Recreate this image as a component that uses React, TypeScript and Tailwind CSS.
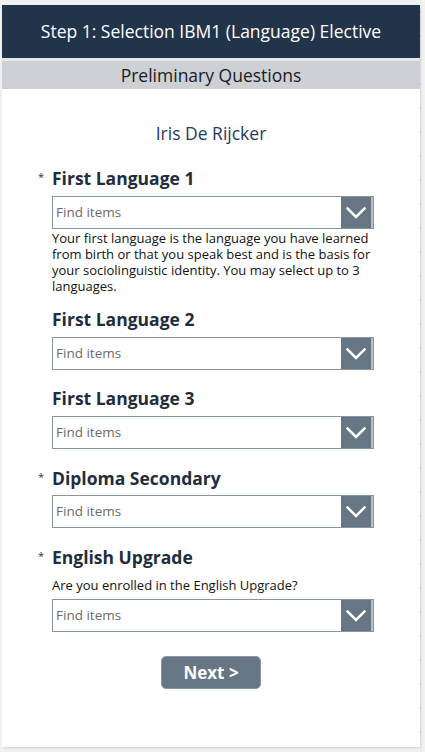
import React from 'react';

const Chevron = () => (
  <svg width="20" height="12" viewBox="0 0 20 12" fill="none">
    <path d="M1.5 1.5 L10 10 L18.5 1.5" stroke="white" strokeWidth="2.5" strokeLinecap="square" />
  </svg>
);

const Dropdown = () => (
  <div className="flex h-[33px] w-[322px] border border-[#8a949e] bg-white">
    <div className="flex flex-1 items-center pl-[3px] text-[13.5px] text-[#6b6b6b]">Find items</div>
    <div className="flex w-[32px] items-center justify-center bg-[#667684] border-r-2 border-[#b8bec4]">
      <Chevron />
    </div>
  </div>
);

const Label = ({ text, required }: { text: string; required?: boolean }) => (
  <div className="relative flex h-[24px] items-center">
    {required && <span className="absolute left-[-14px] top-[3px] text-[11px] text-[#333]">*</span>}
    <span className="text-[17.5px] font-bold text-[#1f2d3d]">{text}</span>
  </div>
);

const App = () => {
  return (
    <div
      className="h-[752px] w-[425px] bg-[#f1f1f1] bg-[radial-gradient(#d6d6d6_1px,transparent_1px)] bg-[length:24px_24px] pt-[5px] pl-[2px]"
      style={{ fontFamily: '"Open Sans", "Liberation Sans", sans-serif' }}
    >
      <div className="flex h-[742px] w-[418px] flex-col bg-white shadow-[1px_1px_2px_rgba(0,0,0,0.12)]">
        {/* Header */}
        <div className="flex h-[53px] items-center justify-center bg-[#22344a] text-[17.5px] text-white">
          Step 1: Selection IBM1 (Language) Elective
        </div>
        <div className="h-[3px] bg-[#e4e6e8]" />
        <div className="flex h-[28px] items-center justify-center bg-[#cdd0d4] text-[17.5px] text-[#1c1c1c]">
          Preliminary Questions
        </div>

        <div className="mt-[32px] text-center text-[17.5px] leading-[24px] text-[#1f3a5f]">Iris De Rijcker</div>

        <div className="flex flex-col pl-[50px]">
          <div className="mt-[21px]">
            <Label text="First Language 1" required />
          </div>
          <div className="mt-[6px]">
            <Dropdown />
          </div>
          <p className="mt-[1px] w-[335px] text-[13px] leading-[16px] text-[#111]">
            Your first language is the language you have learned from birth or that you speak best and is the basis for your sociolinguistic identity. You may select up to 3 languages.
          </p>

          <div className="mt-[13px]">
            <Label text="First Language 2" />
          </div>
          <div className="mt-[6px]">
            <Dropdown />
          </div>

          <div className="mt-[16px]">
            <Label text="First Language 3" />
          </div>
          <div className="mt-[6px]">
            <Dropdown />
          </div>

          <div className="mt-[17px]">
            <Label text="Diploma Secondary" required />
          </div>
          <div className="mt-[5px]">
            <Dropdown />
          </div>

          <div className="mt-[17px]">
            <Label text="English Upgrade" required />
          </div>
          <div className="mt-[7px] text-[13px] leading-[18px] text-[#111]">Are you enrolled in the English Upgrade?</div>
          <div className="mt-[5px]">
            <Dropdown />
          </div>
        </div>

        <div className="mt-[24px] flex justify-center">
          <button className="h-[33px] w-[100px] rounded-[5px] border border-[#8a96a2] bg-[#667684] text-[17px] font-bold text-white">
            Next &gt;
          </button>
        </div>
      </div>
    </div>
  );
};

export default App;
